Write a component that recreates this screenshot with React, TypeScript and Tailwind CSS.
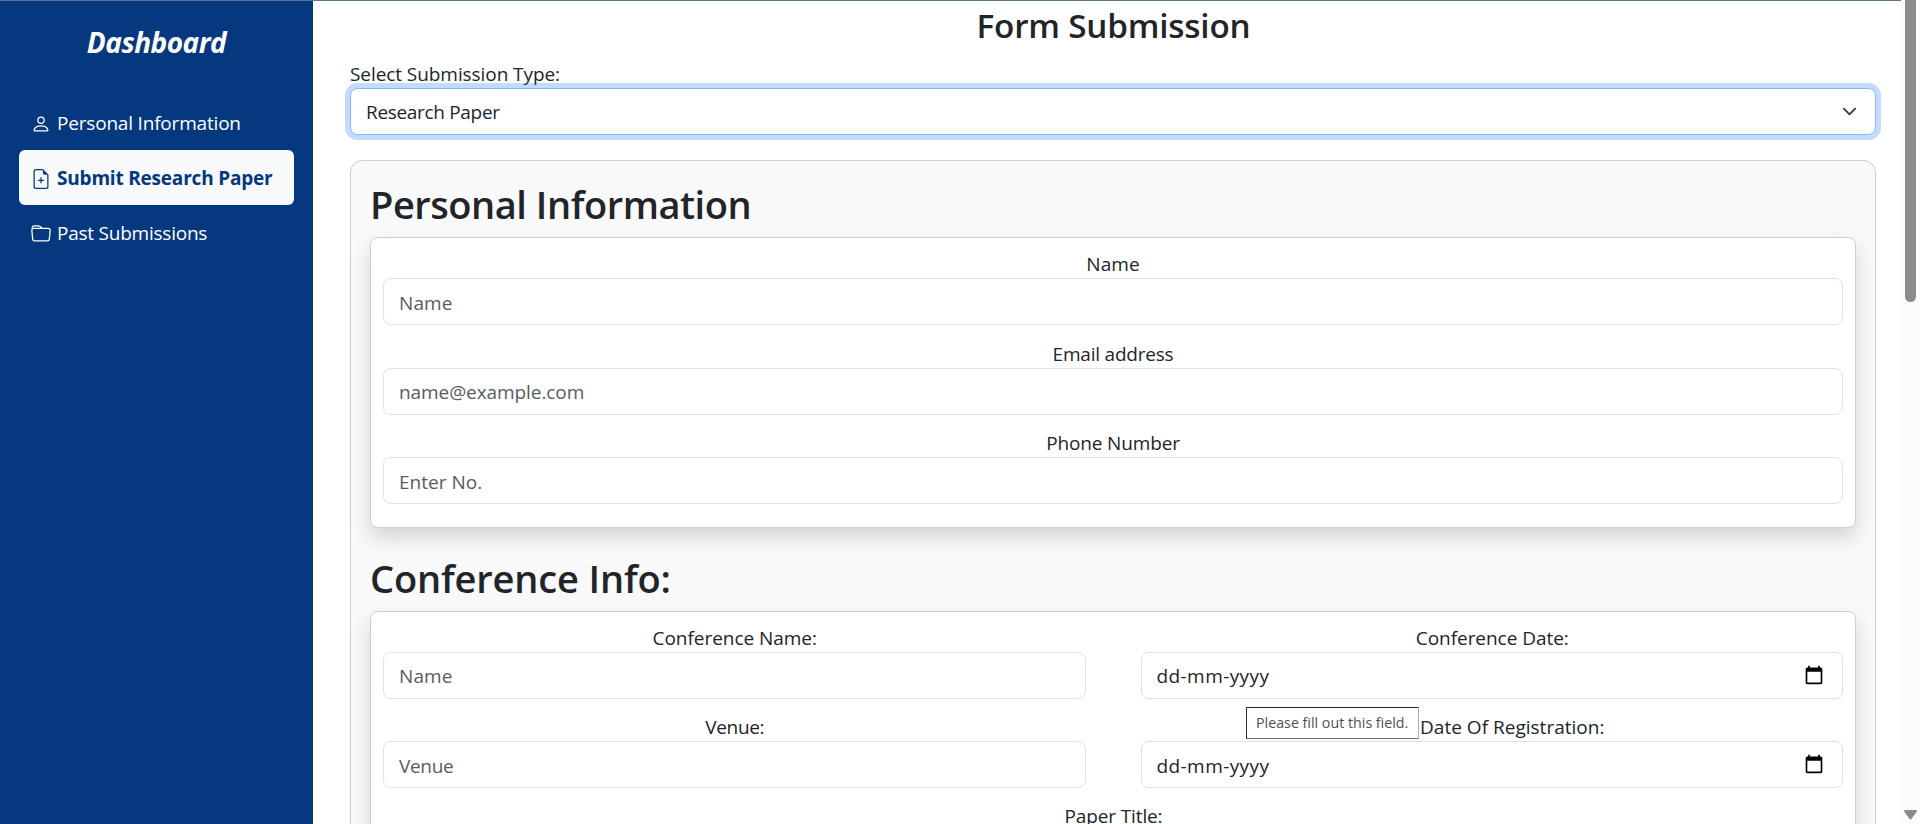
import React from "react";
import { BsFileEarmarkPlus, BsFolder, BsPerson } from "react-icons/bs";

function Label({ text, className }: { text: string; className: string }) {
  return (
    <label className={`block h-[30px] text-center leading-[32px] whitespace-nowrap ${className}`}>
      {text}
    </label>
  );
}

function TextField({
  label,
  placeholder,
  labelClass,
  inputClass,
}: {
  label: string;
  placeholder: string;
  labelClass: string;
  inputClass: string;
}) {
  return (
    <div className="flex flex-col">
      <Label text={label} className={labelClass} />
      <input
        type="text"
        placeholder={placeholder}
        className={`h-[47px] w-full rounded-[7.5px] border border-[#dee2e6] bg-white pr-3.5 pl-[15px] placeholder:text-[#595c5f] placeholder:opacity-100 ${inputClass}`}
      />
    </div>
  );
}

function DateField({
  label,
  labelClass,
  valueClass,
}: {
  label: string;
  labelClass: string;
  valueClass: string;
}) {
  return (
    <div className="flex flex-col">
      <Label text={label} className={labelClass} />
      <div
        className={`flex h-[47px] items-start justify-between rounded-[7.5px] border border-[#dee2e6] bg-white pr-[18px] pl-[15px] tracking-[0.42px] ${valueClass}`}
      >
        <span>dd-mm-yyyy</span>
        <svg className="mt-3 h-5 w-5" viewBox="0 0 24 24" fill="#000">
          <path d="M20 3h-1V1h-2v2H7V1H5v2H4c-1.1 0-2 .9-2 2v16c0 1.1.9 2 2 2h16c1.1 0 2-.9 2-2V5c0-1.1-.9-2-2-2zm0 18H4V8h16v13z" />
        </svg>
      </div>
    </div>
  );
}

function Sidebar() {
  return (
    <aside className="flex w-[313px] shrink-0 flex-col bg-[#05387e] px-[19px] pt-[23px] text-white">
      <h2 className="h-[34px] text-center text-[28px] leading-[36px] font-bold tracking-[-0.5px] italic">
        Dashboard
      </h2>
      <nav className="mt-[37px] flex flex-col leading-[53px] whitespace-nowrap">
        <a className="flex h-[55px] items-center gap-1.5 rounded-[6px] px-3 pt-0.5 tracking-[-0.19px]">
          <BsPerson className="h-5 w-5 shrink-0" />
          Personal Information
        </a>
        <a className="flex h-[55px] items-center gap-1.5 rounded-[6px] bg-[#f8f9fa] px-3 pt-0.5 font-bold tracking-[-0.2px] text-[#05387e]">
          <BsFileEarmarkPlus className="h-5 w-5 shrink-0" />
          Submit Research Paper
        </a>
        <a className="flex h-[55px] items-center gap-1.5 rounded-[6px] px-3 pt-0.5 tracking-[-0.23px]">
          <BsFolder className="h-5 w-5 shrink-0" />
          Past Submissions
        </a>
      </nav>
    </aside>
  );
}

function Scrollbar() {
  return (
    <div className="flex w-[19px] shrink-0 flex-col items-center justify-between bg-[#fcfcfc] pr-px pb-1">
      <div className="ml-px h-[302px] w-[11px] rounded-b-full bg-[#8b8b8b]" />
      <svg className="h-[10px] w-[13px]" viewBox="0 0 13 10" fill="#8b8b8b">
        <path d="M1.2 0h10.6c1 0 1.5 1 .9 1.8L7.4 9c-.5.7-1.3.7-1.8 0L.3 1.8C-.3 1 .2 0 1.2 0z" />
      </svg>
    </div>
  );
}

export default function App() {
  return (
    <div className="relative flex h-[824px] w-full overflow-hidden bg-white font-['Open_Sans','Noto_Sans',sans-serif] text-[19px] text-[#212529]">
      <div className="flex min-w-0 flex-1 flex-col">
        <div className="h-px shrink-0 bg-[#5f7499]" />
        <div className="flex min-h-0 flex-1">
          <Sidebar />
          <main className="flex min-w-0 flex-1 flex-col pt-[3px] pr-[25px] pl-[37px]">
            <h1 className="h-[42px] shrink-0 pl-px text-center text-[33.25px] leading-[42px] font-semibold tracking-[-0.2px]">
              Form Submission
            </h1>
            <label className="mt-3 block h-[30px] shrink-0 leading-[32px] tracking-[-0.07px]">
              Select Submission Type:
            </label>
            <button className="flex h-[47px] shrink-0 items-center justify-between rounded-[7.5px] border border-[#86b7fe] bg-white pr-[18px] pl-[15px] text-left tracking-[-0.32px] ring-[5px] ring-[#0d6efd]/25">
              <span className="pt-0.5 leading-[43px]">Research Paper</span>
              <svg className="h-[15px] w-[15px]" viewBox="0 0 16 16" fill="none">
                <path
                  d="m2 5 6 6 6-6"
                  stroke="#343a40"
                  strokeWidth="2"
                  strokeLinecap="round"
                  strokeLinejoin="round"
                />
              </svg>
            </button>

            <div className="mt-[25px] h-[1200px] shrink-0 rounded-[12.5px] border border-[#ccc] bg-[#f9f9f9] px-[19px] pt-[19px]">
              <h2 className="h-12 text-[38px] leading-[48px] font-semibold tracking-[-0.46px]">
                Personal Information
              </h2>
              <section className="mt-[9px] flex h-[291px] flex-col rounded-[7.5px] border border-[#cfcfcf] bg-white px-3 pt-[10px] shadow-[0_10px_20px_rgba(0,0,0,0.15)]">
                <TextField label="Name" placeholder="Name" labelClass="tracking-[0.1px]" inputClass="pt-[2px] tracking-[0.1px]" />
                <div className="mt-[13px]">
                  <TextField label="Email address" placeholder="name@example.com" labelClass="tracking-[-0.21px]" inputClass="tracking-[-0.08px]" />
                </div>
                <div className="mt-3">
                  <TextField label="Phone Number" placeholder="Enter No." labelClass="tracking-[-0.15px]" inputClass="pt-[2px] tracking-[0.03px]" />
                </div>
              </section>

              <h2 className="mt-[26px] h-12 text-[38px] leading-[48px] font-semibold tracking-[-0.15px]">
                Conference Info:
              </h2>
              <section className="mt-[9px] flex h-[900px] flex-col gap-3 rounded-[7.5px] border border-[#cfcfcf] bg-white px-3 pt-[10px] shadow-[0_10px_20px_rgba(0,0,0,0.15)]">
                <div className="grid grid-cols-2 gap-x-[55px] gap-y-3">
                  <TextField label="Conference Name:" placeholder="Name" labelClass="pl-px tracking-[-0.04px]" inputClass="tracking-[0.1px]" />
                  <DateField label="Conference Date:" labelClass="pl-px tracking-[-0.04px]" valueClass="leading-[46px]" />
                  <TextField label="Venue:" placeholder="Venue" labelClass="pl-px tracking-[-0.33px]" inputClass="pt-[2px] tracking-[-0.33px]" />
                  <DateField label="Date Of Registration:" labelClass="pl-[41px] tracking-[0.01px]" valueClass="leading-[48px]" />
                </div>
                <Label text="Paper Title:" className="pl-px tracking-[-0.13px]" />
              </section>
            </div>
          </main>
        </div>
      </div>
      <Scrollbar />
      <div className="absolute top-[707px] left-[1246px] flex h-8 w-[173px] items-center border border-t-[#2b2b2b] border-r-[#b0b0b0] border-b-[#767676] border-l-[#2b2b2b] bg-white pl-[9px] text-[14.25px] leading-[30px] whitespace-nowrap text-[#505050]">
        Please fill out this field.
      </div>
    </div>
  );
}
